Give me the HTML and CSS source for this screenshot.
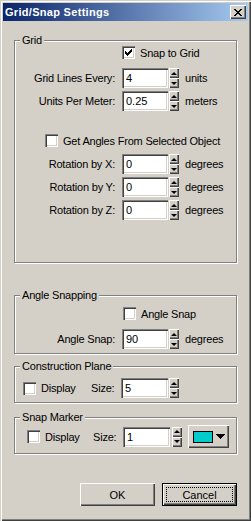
FILE: index.html
```html
<!DOCTYPE html>
<html lang="en">
<head>
    <meta charset="UTF-8">
    <title>Grid/Snap Settings</title>
    <link rel="stylesheet" href="styles.css">
</head>
<body>
    <div class="window">
        <div class="titlebar">
            <span class="title">Grid/Snap Settings</span>
            <span class="close-btn">
                <svg width="8" height="7" viewBox="0 0 8 7" shape-rendering="crispEdges"><path d="M0 0h2v1H0zM6 0h2v1H6zM1 1h2v1H1zM5 1h2v1H5zM2 2h4v1H2zM3 3h2v1H3zM2 4h4v1H2zM1 5h2v1H1zM5 5h2v1H5zM0 6h2v1H0zM6 6h2v1H6z" fill="#000"/></svg>
            </span>
        </div>

        <div class="client">
            <div class="group grid-group">
                <span class="group-title">Grid</span>
                <label class="check snap-check"><span class="box"><svg width="7" height="7" viewBox="0 0 7 7" shape-rendering="crispEdges"><path d="M0 2h1v3H0zM1 3h1v3H1zM2 4h1v3H2zM3 3h1v3H3zM4 2h1v3H4zM5 1h1v3H5zM6 0h1v3H6z" fill="#000"/></svg></span>Snap to Grid</label>
                <div class="row gap-9">
                    <span class="lbl">Grid Lines Every:</span>
                    <input class="num" value="4">
                    <span class="updown"><span class="spin up"></span><span class="spin down"></span></span>
                    <span class="unit">units</span>
                </div>
                <div class="row gap-3">
                    <span class="lbl">Units Per Meter:</span>
                    <input class="num" value="0.25">
                    <span class="updown"><span class="spin up"></span><span class="spin down"></span></span>
                    <span class="unit">meters</span>
                </div>
                <label class="check angles-check"><span class="box"></span>Get Angles From Selected Object</label>
                <div class="row gap-7">
                    <span class="lbl">Rotation by X:</span>
                    <input class="num" value="0">
                    <span class="updown"><span class="spin up"></span><span class="spin down"></span></span>
                    <span class="unit">degrees</span>
                </div>
                <div class="row gap-3">
                    <span class="lbl">Rotation by Y:</span>
                    <input class="num" value="0">
                    <span class="updown"><span class="spin up"></span><span class="spin down"></span></span>
                    <span class="unit">degrees</span>
                </div>
                <div class="row gap-3">
                    <span class="lbl">Rotation by Z:</span>
                    <input class="num" value="0">
                    <span class="updown"><span class="spin up"></span><span class="spin down"></span></span>
                    <span class="unit">degrees</span>
                </div>
            </div>

            <div class="group angle-group">
                <span class="group-title">Angle Snapping</span>
                <label class="check anglesnap-check"><span class="box"></span>Angle Snap</label>
                <div class="row gap-9">
                    <span class="lbl">Angle Snap:</span>
                    <input class="num" value="90">
                    <span class="updown"><span class="spin up"></span><span class="spin down"></span></span>
                    <span class="unit">degrees</span>
                </div>
            </div>

            <div class="group plane-group">
                <span class="group-title">Construction Plane</span>
                <div class="row gap-6">
                    <label class="check inline-check plane-check"><span class="box"></span>Display</label>
                    <span class="size-lbl">Size:</span>
                    <input class="num wide" value="5">
                    <span class="updown"><span class="spin up"></span><span class="spin down"></span></span>
                </div>
            </div>

            <div class="group marker-group">
                <span class="group-title">Snap Marker</span>
                <div class="row tall gap-2">
                    <label class="check inline-check marker-check"><span class="box"></span>Display</label>
                    <span class="size-lbl">Size:</span>
                    <input class="num wide" value="1">
                    <span class="updown spaced"><span class="spin up"></span><span class="spin down"></span></span>
                    <span class="color-btn">
                        <span class="swatch"></span>
                        <svg width="9" height="5" viewBox="0 0 9 5" shape-rendering="crispEdges"><path d="M0 0h9v1H0zM1 1h7v1H1zM2 2h5v1H2zM3 3h3v1H3zM4 4h1v1H4z" fill="#000"/></svg>
                    </span>
                </div>
            </div>

            <div class="buttons">
                <button class="btn">OK</button>
                <button class="btn default"><span class="focus">Cancel</span></button>
            </div>
        </div>
    </div>
</body>
</html>
```

FILE: styles.css
```css
* {
    box-sizing: border-box;
}
body {
    margin: 0;
    background: #d4d0c8;
    font-family: "Liberation Sans", Arial, sans-serif;
    font-size: 11px;
    letter-spacing: -0.2px;
    color: #000;
}
.window {
    width: 251px;
    height: 521px;
    padding: 3px;
    background: #d4d0c8;
    box-shadow: inset 1px 1px #d4d0c8, inset 2px 2px #fff, inset -1px -1px #404040, inset -2px -2px #808080;
}
.titlebar {
    height: 18px;
    display: flex;
    align-items: center;
    justify-content: space-between;
    padding: 0 2px 0 2px;
    background: linear-gradient(to right, #0a246a, #a6caf0);
}
.title {
    color: #fff;
    font-weight: bold;
    letter-spacing: 0.3px;
}
.close-btn {
    width: 16px;
    height: 14px;
    display: flex;
    align-items: center;
    justify-content: center;
    background: #d4d0c8;
    box-shadow: inset 1px 1px #fff, inset -1px -1px #404040, inset -2px -2px #808080;
}
.client {
    padding: 19px 11px 0 11px;
}

/* group boxes */
.group {
    border: 1px solid #808080;
    box-shadow: inset 1px 1px #fff, 1px 1px #fff;
}
.group-title {
    display: table;
    margin: -7px 0 0 5px;
    padding: 0 2px;
    line-height: 12px;
    background: #d4d0c8;
}
.grid-group {
    padding-bottom: 42px;
}
.angle-group {
    margin-top: 32px;
    padding-bottom: 4px;
}
.plane-group {
    margin-top: 12px;
    padding-bottom: 4px;
}
.marker-group {
    margin-top: 14px;
    padding-bottom: 5px;
}

/* checkboxes */
.check {
    display: flex;
    align-items: center;
    height: 13px;
}
.box {
    width: 13px;
    height: 13px;
    flex: none;
    margin-right: 5px;
    display: flex;
    align-items: center;
    justify-content: center;
    background: #fff;
    box-shadow: inset 1px 1px #808080, inset 2px 2px #404040, inset -1px -1px #fff, inset -2px -2px #d4d0c8;
}
.snap-check {
    margin-left: 107px;
}
.angles-check {
    margin: 23px 0 0 30px;
}
.anglesnap-check {
    margin: 6px 0 0 108px;
}
.inline-check {
    height: 20px;
}
.plane-check {
    width: 68px;
    margin-left: 8px;
}
.marker-check {
    width: 66px;
    margin-left: 12px;
}

/* label / spinner rows */
.row {
    display: flex;
    align-items: center;
    height: 20px;
}
.row.tall {
    height: 23px;
}
.gap-2 { margin-top: 2px; }
.gap-3 { margin-top: 3px; }
.gap-6 { margin-top: 6px; }
.gap-7 { margin-top: 7px; }
.gap-9 { margin-top: 9px; }
.lbl {
    width: 100px;
    margin-right: 7px;
    text-align: right;
}
.size-lbl {
    width: 30px;
}
.num {
    width: 46px;
    height: 20px;
    margin: 0;
    padding: 0 0 0 4px;
    border: none;
    outline: none;
    font: inherit;
    color: #000;
    background: #fff;
    box-shadow: inset 1px 1px #808080, inset 2px 2px #404040, inset -1px -1px #fff, inset -2px -2px #d4d0c8;
}
.num.wide {
    width: 47px;
}
.updown {
    display: flex;
    flex-direction: column;
    margin-left: 1px;
}
.updown.spaced {
    margin-left: 2px;
}
.spin {
    width: 10px;
    height: 10px;
    display: flex;
    align-items: center;
    justify-content: center;
    background: #d4d0c8;
    box-shadow: inset 1px 1px #fff, inset -1px -1px #404040, inset -2px -2px #808080;
}
.spin::before {
    content: "";
    border-left: 3px solid transparent;
    border-right: 3px solid transparent;
}
.spin.up::before {
    border-bottom: 3px solid #000;
}
.spin.down::before {
    border-top: 3px solid #000;
}
.unit {
    margin-left: 6px;
}

/* colour picker button */
.color-btn {
    width: 41px;
    height: 23px;
    margin-left: 6px;
    display: flex;
    align-items: center;
    padding-left: 5px;
    gap: 3px;
    background: #d4d0c8;
    box-shadow: inset 1px 1px #fff, inset -1px -1px #404040, inset -2px -2px #808080;
}
.swatch {
    width: 20px;
    height: 12px;
    border: 1px solid #000;
    background: #00cccc;
}

/* dialog buttons */
.buttons {
    display: flex;
    justify-content: flex-end;
    gap: 7px;
    margin-top: 29px;
}
.btn {
    width: 75px;
    height: 23px;
    padding: 0;
    border: none;
    font: inherit;
    color: #000;
    background: #d4d0c8;
    box-shadow: inset 1px 1px #fff, inset -1px -1px #404040, inset -2px -2px #808080;
}
.btn.default {
    padding: 4px;
    box-shadow: inset 0 0 0 1px #000, inset 2px 2px #fff, inset -2px -2px #404040, inset -3px -3px #808080;
}
.focus {
    display: flex;
    align-items: center;
    justify-content: center;
    height: 100%;
    border: 1px dotted #000;
}
```
